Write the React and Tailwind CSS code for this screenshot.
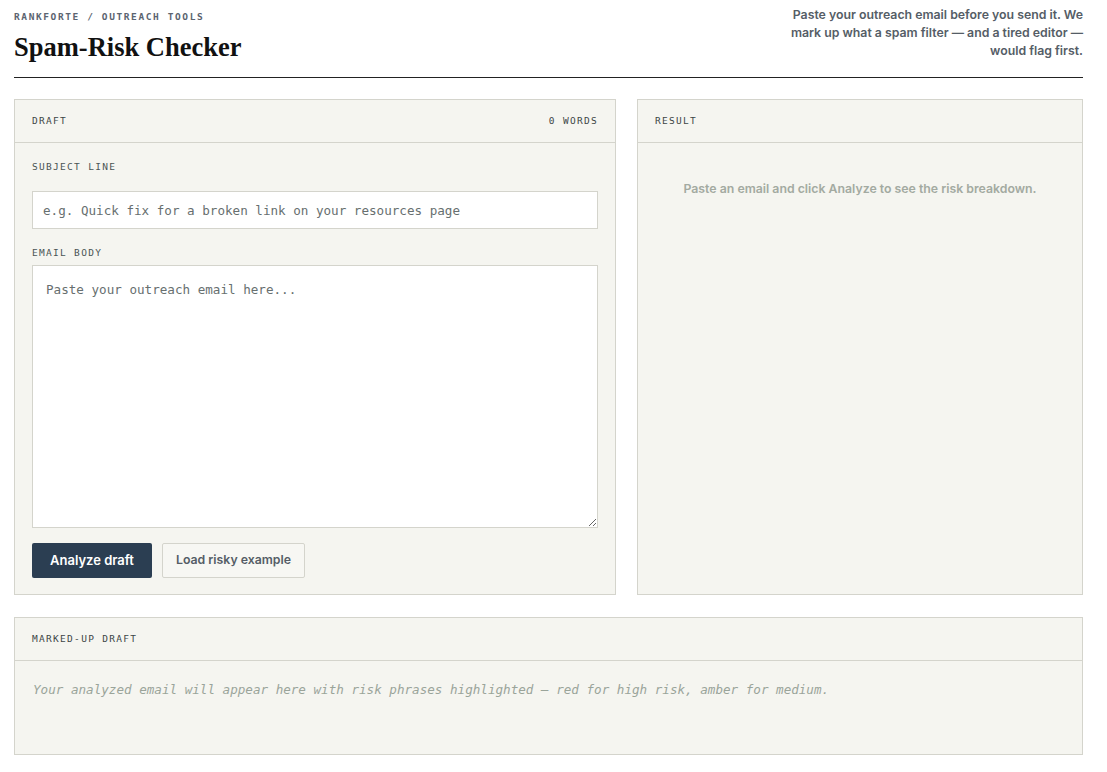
import { useState } from 'react';

const mono = "font-['DejaVu_Sans_Mono','Liberation_Mono',monospace]";
const sans = "font-['Inter','Noto_Sans',sans-serif]";

function PanelHeader({ left, right }) {
  return (
    <div className={`h-[43px] px-[17px] flex items-center justify-between border-b border-[#d4d4cc] ${mono} text-[9.5px] tracking-[1.3px] text-[#3d4646]`}>
      <span>{left}</span>
      {right && <span>{right}</span>}
    </div>
  );
}

export default function App() {
  const [subject, setSubject] = useState('');
  const [body, setBody] = useState('');

  const words = body.trim() ? body.trim().split(/\s+/).length : 0;

  return (
    <div className={`min-h-screen bg-white pl-[14px] pr-[24px] ${sans}`}>
      <header className="pt-[10px] pb-[15px] border-b border-[#222] flex justify-between items-start">
        <div>
          <div className={`${mono} text-[9.5px] leading-[14px] font-bold tracking-[1.6px] text-[#5b6470]`}>
            RANKFORTE / OUTREACH TOOLS
          </div>
          <h1 className="mt-[8px] font-['Liberation_Serif','DejaVu_Serif',serif] text-[26.5px] leading-[30px] font-bold text-[#111]">
            Spam-Risk Checker
          </h1>
        </div>
        <p className="-mt-[4px] w-[300px] text-right text-[12.3px] leading-[18px] font-semibold text-[#555d66]">
          Paste your outreach email before you send it. We mark up what a spam filter — and a tired editor — would flag first.
        </p>
      </header>

      <div className="mt-[21px] grid grid-cols-[602px_1fr] gap-[21px]">
        <section className="bg-[#f5f5f0] border border-[#d4d4cc]">
          <PanelHeader left="DRAFT" right={`${words} WORDS`} />
          <div className="px-[17px] pt-[17px] pb-[16px]">
            <label className={`block ${mono} text-[9.5px] leading-[14px] tracking-[1.3px] text-[#4a5454]`}>
              SUBJECT LINE
            </label>
            <input
              value={subject}
              onChange={e => setSubject(e.target.value)}
              placeholder="e.g. Quick fix for a broken link on your resources page"
              className={`mt-[17px] block w-full h-[38px] px-[10px] bg-white border border-[#d4d4cc] ${mono} text-[12.6px] text-[#333] placeholder-[#676f6f] outline-none`}
            />
            <label className={`block mt-[17px] ${mono} text-[9.5px] leading-[14px] tracking-[1.3px] text-[#4a5454]`}>
              EMAIL BODY
            </label>
            <textarea
              value={body}
              onChange={e => setBody(e.target.value)}
              placeholder="Paste your outreach email here..."
              className={`mt-[5px] block w-full h-[263px] px-[13px] py-[15px] bg-white border border-[#d4d4cc] ${mono} text-[12.6px] leading-[18px] text-[#333] placeholder-[#676f6f] outline-none`}
            />
            <div className="mt-[15px] flex gap-[10px]">
              <button className="h-[35px] w-[120px] rounded-[2px] bg-[#2b3e52] text-white text-[13px] font-semibold">
                Analyze draft
              </button>
              <button
                onClick={() => { setSubject('URGENT: Guaranteed #1 rankings!!!'); setBody('Act now! 100% FREE backlinks, limited time offer. Click here!'); }}
                className="h-[35px] w-[143px] rounded-[2px] bg-[#f7f7f3] border border-[#d4d4cc] text-[#555d66] text-[12.3px] font-semibold"
              >
                Load risky example
              </button>
            </div>
          </div>
        </section>

        <section className="bg-[#f5f5f0] border border-[#d4d4cc]">
          <PanelHeader left="RESULT" />
          <p className="pt-[37px] text-center text-[12.3px] leading-[18px] font-semibold text-[#a3aaa1]">
            Paste an email and click Analyze to see the risk breakdown.
          </p>
        </section>
      </div>

      <section className="mt-[22px] bg-[#f5f5f0] border border-[#d4d4cc]">
        <PanelHeader left="MARKED-UP DRAFT" />
        <div className="h-[93px] px-[18px] pt-[20px]">
          <p className={`${mono} italic text-[12.6px] leading-[18px] text-[#9aa49a]`}>
            Your analyzed email will appear here with risk phrases highlighted — red for high risk, amber for medium.
          </p>
        </div>
      </section>
      <div className="h-[18px]" />
    </div>
  );
}
